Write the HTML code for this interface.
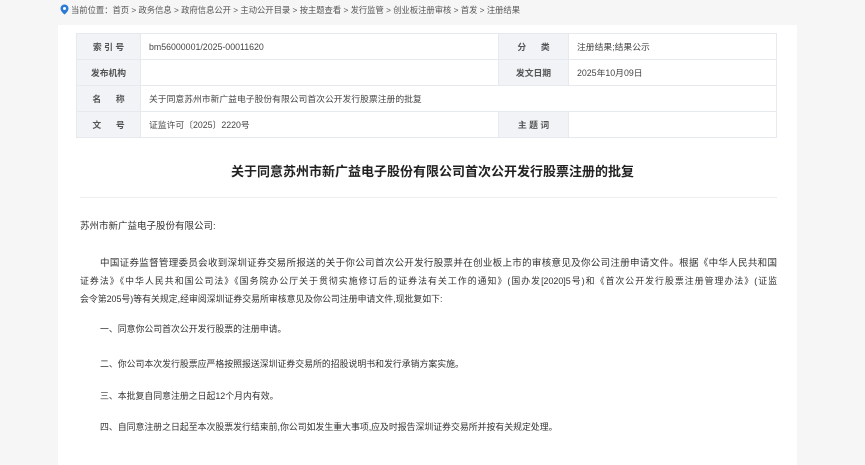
<!DOCTYPE html>
<html><head><meta charset="utf-8"><style>
*{margin:0;padding:0;box-sizing:border-box}
body{width:865px;height:462px;background:#f6f6f6;font-family:"Liberation Sans","Noto Sans CJK SC",sans-serif;color:#333;position:relative;overflow:hidden}
.bc{position:absolute;left:60px;top:4px;font-size:8.3px;color:#555;line-height:12px}
.bc svg{vertical-align:-2px;margin-right:2px}
.box{position:absolute;left:58px;top:25px;width:739px;height:440px;background:#fff}
table{position:absolute;left:76px;top:33px;width:701px;border-collapse:collapse;font-size:8.8px}
td{border:1px solid #e6e9ee;height:26px;padding-left:8px;color:#444}
td.l{background:#f1f3f6;text-align:center;padding:0;font-weight:bold;color:#555}
.t{position:absolute;left:0;width:865px;top:161px;text-align:center;font-size:13px;font-weight:bold;color:#222}
.hr{position:absolute;left:80px;width:697px;top:197px;border-top:1px solid #eee}
.p{position:absolute;font-size:8.9px;line-height:13px;white-space:nowrap;color:#333}
.j{text-align:justify;text-align-last:justify;white-space:normal;height:13px;overflow:hidden}
</style></head><body>
<div class="bc"><svg width="9" height="11" viewBox="0 0 9 11"><path d="M4.5 0.5a4 4 0 0 1 4 4c0 3-4 6-4 6s-4-3-4-6a4 4 0 0 1 4-4z" fill="#2a7ad6"/><circle cx="4.5" cy="4.5" r="1.5" fill="#fff"/></svg>当前位置：首页 &gt; 政务信息 &gt; 政府信息公开 &gt; 主动公开目录 &gt; 按主题查看 &gt; 发行监管 &gt; 创业板注册审核 &gt; 首发 &gt; 注册结果</div>
<div class="box"></div>
<table>
<tr><td class="l" style="width:64px">索 引 号</td><td style="width:358px">bm56000001/2025-00011620</td><td class="l" style="width:70px">分&nbsp;&nbsp;&nbsp;&nbsp;&nbsp;&nbsp;类</td><td>注册结果;结果公示</td></tr>
<tr><td class="l">发布机构</td><td></td><td class="l">发文日期</td><td>2025年10月09日</td></tr>
<tr><td class="l">名&nbsp;&nbsp;&nbsp;&nbsp;&nbsp;&nbsp;称</td><td colspan="3">关于同意苏州市新广益电子股份有限公司首次公开发行股票注册的批复</td></tr>
<tr><td class="l">文&nbsp;&nbsp;&nbsp;&nbsp;&nbsp;&nbsp;号</td><td>证监许可〔2025〕2220号</td><td class="l">主 题 词</td><td></td></tr>
</table>
<div class="t">关于同意苏州市新广益电子股份有限公司首次公开发行股票注册的批复</div>
<div class="hr"></div>
<div class="p" style="left:80px;top:220px;font-size:9.5px">苏州市新广益电子股份有限公司:</div>
<div class="p j" style="left:100px;top:257px;width:677px;font-size:9.5px">中国证券监督管理委员会收到深圳证券交易所报送的关于你公司首次公开发行股票并在创业板上市的审核意见及你公司注册申请文件。根据《中华人民共和国</div>
<div class="p j" style="left:80px;top:275px;width:697px">证券法》《中华人民共和国公司法》《国务院办公厅关于贯彻实施修订后的证券法有关工作的通知》(国办发[2020]5号)和《首次公开发行股票注册管理办法》(证监</div>
<div class="p" style="left:80px;top:293px">会令第205号)等有关规定,经审阅深圳证券交易所审核意见及你公司注册申请文件,现批复如下:</div>
<div class="p" style="left:100px;top:323px">一、同意你公司首次公开发行股票的注册申请。</div>
<div class="p" style="left:100px;top:358px">二、你公司本次发行股票应严格按照报送深圳证券交易所的招股说明书和发行承销方案实施。</div>
<div class="p" style="left:100px;top:390px">三、本批复自同意注册之日起12个月内有效。</div>
<div class="p" style="left:100px;top:421px">四、自同意注册之日起至本次股票发行结束前,你公司如发生重大事项,应及时报告深圳证券交易所并按有关规定处理。</div>
</body></html>
